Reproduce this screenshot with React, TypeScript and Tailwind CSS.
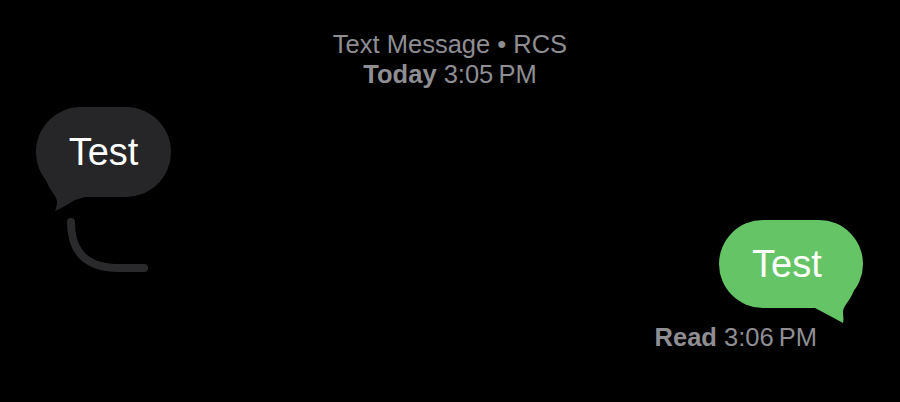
export default function App() {
  return (
    <div
      className="w-[900px] h-[402px] bg-black flex flex-col overflow-hidden"
      style={{ fontFamily: '"Liberation Sans", Arial, sans-serif' }}
    >
      {/* header */}
      <div className="pt-[29px] flex flex-col items-center text-[25.5px] leading-[30px] text-[#8e8e93]">
        <div>Text Message • RCS</div>
        <div>
          <span className="font-bold">Today</span> 3:05&#8201;PM
        </div>
      </div>

      {/* incoming */}
      <div className="mt-[18px] pl-[36px]">
        <div className="relative w-[135px] h-[90px]">
          <svg
            className="absolute left-[4px] top-[63px]"
            width="45"
            height="45"
            viewBox="0 0 45 45"
          >
            <path
              d="M6 10 C 10 22, 18 26, 17 34 Q 16 39 15 41 Q 26 36 35 30 L 45 27 L 45 0 Z"
              fill="#262628"
            />
          </svg>
          <div className="relative w-[135px] h-[90px] rounded-[45px] bg-[#262628] text-white text-[38px] leading-[90px] text-center">
            Test
          </div>
        </div>
      </div>

      <div className="mt-[19px] flex justify-between items-start">
        <svg className="ml-[62px]" width="90" height="58" viewBox="0 0 90 58">
          <path
            d="M9 6 C 9 40, 28 52, 58 52 L 82 52"
            fill="none"
            stroke="#2a2a2c"
            strokeWidth="8"
            strokeLinecap="round"
          />
        </svg>

        {/* outgoing */}
        <div className="mt-[4px] pr-[37px] flex flex-col items-end">
          <div className="relative w-[144px] h-[88px]">
            <svg
              className="absolute left-[96px] top-[60px]"
              width="45"
              height="45"
              viewBox="0 0 45 45"
            >
              <path
                d="M39 10 C 35 22, 27 26, 28 34 Q 29 39 28 43 Q 19 38 0 28 L 0 0 Z"
                fill="#65c466"
              />
            </svg>
            <div className="relative w-[144px] h-[88px] rounded-[44px] bg-[#65c466] text-white text-[38px] leading-[88px] pl-[33px]">
              Test
            </div>
          </div>
          <div className="mt-[14px] mr-[46px] text-[25.5px] leading-[30px] text-[#8e8e93]">
            <span className="font-bold">Read</span> 3:06&#8201;PM
          </div>
        </div>
      </div>
    </div>
  );
}
